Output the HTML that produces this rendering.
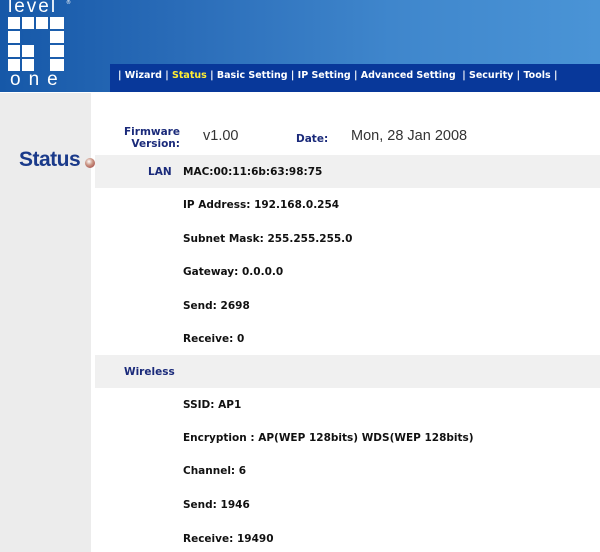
<!DOCTYPE html>
<html><head><style>
*{margin:0;padding:0;box-sizing:border-box}
body{width:600px;height:552px;overflow:hidden;background:#fff;position:relative;font-family:"DejaVu Sans",Verdana,sans-serif}
#hdr{position:absolute;left:0;top:0;width:600px;height:92px;background:linear-gradient(90deg,#1658a8 0%,#2a6cb8 30%,#3f86cc 65%,#4a94d6 100%)}
#nav{position:absolute;left:110px;top:64px;width:490px;height:28px;background:#08389a;color:#fff;font-size:9.5px;font-weight:bold;line-height:24px;white-space:nowrap;padding-left:8px}
#nav b.s{color:#ffee33}
.g{position:absolute;background:#fff}
.lt{position:absolute;color:#fff;font-family:"Liberation Sans",sans-serif;font-size:19px;letter-spacing:2px;line-height:20px}
#left{position:absolute;left:0;top:93px;width:91px;height:459px;background:#ececec}
.band{position:absolute;left:95px;width:505px;height:33px;background:#f0f0f0}
.t{position:absolute;font-size:10.5px;font-weight:bold;color:#111;white-space:nowrap}
.b{position:absolute;font-size:10.5px;font-weight:bold;color:#1a2a7a;white-space:nowrap}
.v{position:absolute;font-size:14.5px;color:#333;font-family:'Liberation Sans',sans-serif}
</style></head><body>
<div id="hdr"></div>
<div class="lt" style="left:8px;top:-3px">level</div>
<div class="lt" style="left:10px;top:70px;letter-spacing:8px">one</div>
<div style="position:absolute;left:66px;top:0;color:#fff;font-size:5px">®</div>
<div class="g" style="left:8px;top:17px;width:12px;height:12px"></div>
<div class="g" style="left:22px;top:17px;width:12px;height:12px"></div>
<div class="g" style="left:36px;top:17px;width:12px;height:12px"></div>
<div class="g" style="left:50px;top:17px;width:14px;height:12px"></div>
<div class="g" style="left:8px;top:31px;width:12px;height:12px"></div>
<div class="g" style="left:50px;top:31px;width:14px;height:12px"></div>
<div class="g" style="left:8px;top:45px;width:12px;height:12px"></div>
<div class="g" style="left:22px;top:45px;width:12px;height:12px"></div>
<div class="g" style="left:50px;top:45px;width:14px;height:12px"></div>
<div class="g" style="left:8px;top:59px;width:12px;height:12px"></div>
<div class="g" style="left:22px;top:59px;width:12px;height:12px"></div>
<div class="g" style="left:50px;top:59px;width:14px;height:12px"></div>
<div id="nav">| Wizard | <b class="s">Status</b> | Basic Setting | IP Setting | Advanced Setting &nbsp;| Security | Tools |</div>
<div id="left"></div>
<div style="position:absolute;left:19px;top:148px;font-family:'Liberation Sans',sans-serif;font-weight:bold;font-size:21px;color:#1a3a8a;letter-spacing:-0.5px">Status</div>
<div style="position:absolute;left:85px;top:158px;width:10px;height:10px;border-radius:50%;background:radial-gradient(circle at 40% 35%,#fff,#c98 40%,#933)"></div>
<div class="b" style="left:124px;top:126px;text-align:right;line-height:12px">Firmware<br>&nbsp;&nbsp;Version:</div>
<div class="v" style="left:203px;top:128px">v1.00</div>
<div class="b" style="left:296px;top:133px">Date:</div>
<div class="v" style="left:351px;top:128px">Mon, 28 Jan 2008</div>
<div class="band" style="top:155px"></div>
<div class="band" style="top:355px"></div>
<div class="b" style="left:148px;top:166px">LAN</div>
<div class="t" style="left:183px;top:166px">MAC:00:11:6b:63:98:75</div>
<div class="t" style="left:183px;top:199px">IP Address: 192.168.0.254</div>
<div class="t" style="left:183px;top:233px">Subnet Mask: 255.255.255.0</div>
<div class="t" style="left:183px;top:266px">Gateway: 0.0.0.0</div>
<div class="t" style="left:183px;top:300px">Send: 2698</div>
<div class="t" style="left:183px;top:333px">Receive: 0</div>
<div class="b" style="left:124px;top:366px">Wireless</div>
<div class="t" style="left:183px;top:399px">SSID: AP1</div>
<div class="t" style="left:183px;top:432px">Encryption : AP(WEP 128bits) WDS(WEP 128bits)</div>
<div class="t" style="left:183px;top:465px">Channel: 6</div>
<div class="t" style="left:183px;top:499px">Send: 1946</div>
<div class="t" style="left:183px;top:533px">Receive: 19490</div>
</body></html>
